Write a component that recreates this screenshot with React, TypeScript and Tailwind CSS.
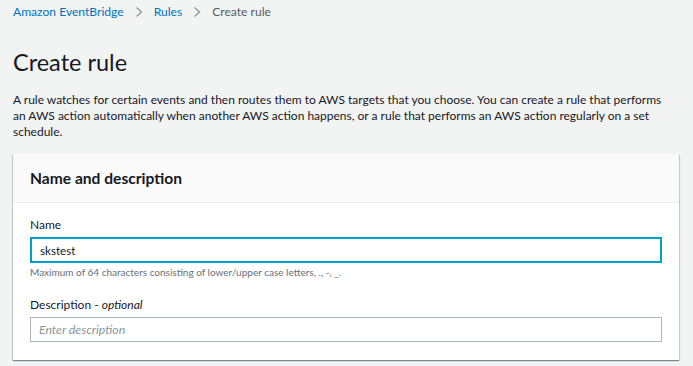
function Chevron() {
  return (
    <span className="text-[#879596]">
      <svg width="10" height="12" viewBox="0 0 10 12" fill="none" stroke="currentColor" strokeWidth="1.2">
        <path d="M2.5 1.5 7.5 6 2.5 10.5" />
      </svg>
    </span>
  );
}

export default function App() {
  return (
    <div className="min-h-screen bg-[#f2f3f3] px-[13px] pt-[4px] font-['Lato',sans-serif] text-[#16191f]">
      <nav className="flex h-[16px] items-center gap-[10px] text-[12.1px] leading-[16px]">
        <a href="#" className="text-[#0073bb]">Amazon EventBridge</a>
        <Chevron />
        <a href="#" className="text-[#0073bb]">Rules</a>
        <Chevron />
        <span className="text-[#545b64]">Create rule</span>
      </nav>

      <h1 className="mt-[25px] text-[23.5px] leading-[34px] font-normal">Create rule</h1>

      <p className="mt-[13px] max-w-[658px] text-[12px] leading-[16px] text-[#16191f]">
        A rule watches for certain events and then routes them to AWS targets that you choose. You can create a rule that performs an AWS action automatically when another AWS action happens, or a rule that performs an AWS action regularly on a set schedule.
      </p>

      <section className="mt-[14px] mr-[1px] bg-white shadow-[0_1px_1px_0_rgba(0,28,36,0.3),1px_1px_1px_0_rgba(0,28,36,0.15),-1px_1px_1px_0_rgba(0,28,36,0.15)]">
        <header className="border-b border-[#eaeded] bg-[#fafafa] px-[17px] py-[14px]">
          <h2 className="text-[15.6px] leading-[20px] font-bold">Name and description</h2>
        </header>
        <div className="px-[17px] pt-[13px] pb-[18px]">
          <label className="block text-[12px] leading-[18px]">Name</label>
          <input
            defaultValue="skstest"
            className="mt-[3px] block h-[26px] w-full border-2 border-[#00a1c9] px-[8px] text-[11.6px] text-[#16191f] outline-none"
          />
          <p className="mt-[2px] text-[10px] leading-[14px] text-[#687078]">
            Maximum of 64 characters consisting of lower/upper case letters, ., -, _.
          </p>
          <label className="mt-[17px] block text-[12px] leading-[18px]">
            Description - <i>optional</i>
          </label>
          <input
            placeholder="Enter description"
            className="mt-[3px] block h-[25px] w-full border border-[#aab7b8] px-[8px] text-[12.3px] italic outline-none placeholder:text-[#879596]"
          />
        </div>
      </section>
    </div>
  );
}
